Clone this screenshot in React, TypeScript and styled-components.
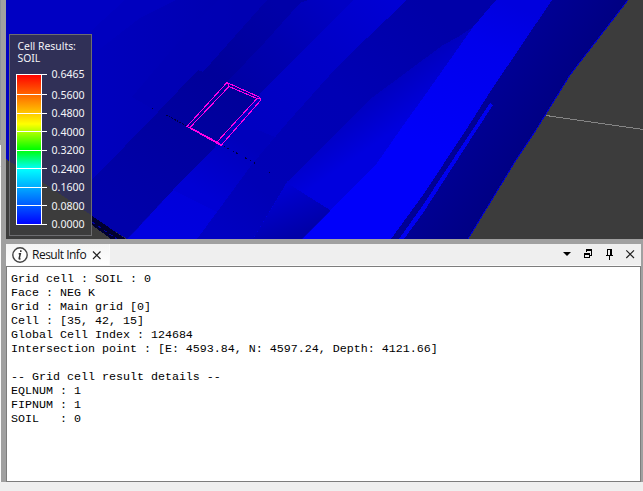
import React from "react";
import styled, { createGlobalStyle } from "styled-components";

const GlobalStyle = createGlobalStyle`
  * { box-sizing: border-box; }
  body { margin: 0; overflow: hidden; background: #efefef; }
`;

const Window = styled.div`
  display: flex;
  width: 643px;
  height: 491px;
  background: #efefef;
`;

const Gutter = styled.div`
  width: 1px;
  height: 482px;
  background: linear-gradient(#8d919a 0 140px, #a0a0a0 140px 145px, #fafafa 145px 166px, #e8e8e8 166px 167px, #fafafa 167px);
`;

const Dock = styled.div`
  width: 642px;
  height: 482px;
  padding-left: 5px;
  background: #a0a0a0;
  display: flex;
  flex-direction: column;
  gap: 5px;
`;

const Viewport = styled.div`
  position: relative;
  height: 239px;
  background: #3c3c3c;
`;

const Scene = styled.svg`
  display: block;
`;

const Legend = styled.div`
  position: absolute;
  left: 3px;
  top: 34px;
  width: 83px;
  height: 202px;
  border: 1px solid #6d6d70;
  background: rgba(60, 60, 60, 0.8);
  color: #f4f4f8;
  font: 10.4px/12px "Noto Sans", sans-serif;
`;

const LegendTitle = styled.div`
  padding: 5px 0 0 7.5px;
  white-space: pre;
  height: 33px;
`;

const LegendBody = styled.div`
  display: flex;
  padding-left: 6px;
  gap: 4.5px;
`;

const ColorBar = styled.svg`
  flex: none;
  margin-top: 6px;
`;

const Labels = styled.div`
  display: flex;
  flex-direction: column;
  font-size: 10.6px;
`;

const Label = styled.div<{ $height: number }>`
  height: ${(p) => p.$height}px;
  line-height: 12px;
`;

const Panel = styled.section`
  width: 635px;
  height: 238px;
  display: flex;
  flex-direction: column;
  background: #efefef;
`;

const TabBar = styled.header`
  display: flex;
  height: 22px;
  justify-content: space-between;
  border-bottom: 1px solid #fafafa;
`;

const Tab = styled.div`
  display: flex;
  align-items: center;
  width: 104px;
  height: 21px;
  padding-left: 6px;
  background: linear-gradient(#f4f4f4, #ffffff);
  border-right: 1px solid #fafafa;
  font: 12px/20px "Open Sans", sans-serif;
  letter-spacing: -0.5px;
  color: #111;
`;

const TabTitle = styled.span`
  width: 64px;
  padding-left: 4px;
  white-space: nowrap;
`;

const Actions = styled.div`
  display: flex;
  width: 80px;
  height: 21px;
`;

const Output = styled.pre`
  flex: 1;
  margin: 0;
  padding: 5px 4px;
  border: 1px solid #7d7d7d;
  background: #fff;
  color: #000;
  font: 11.664px/14px "Courier New", "Liberation Mono", monospace;
`;

const values = ["0.6465", "0.5600", "0.4800", "0.4000", "0.3200", "0.2400", "0.1600", "0.0800", "0.0000"];
const ticks = [0.5, 20.5, 39.5, 57.5, 76.5, 94.5, 113.5, 131.5, 150.5];

const details = `Grid cell : SOIL : 0
Face : NEG K
Grid : Main grid [0]
Cell : [35, 42, 15]
Global Cell Index : 124684
Intersection point : [E: 4593.84, N: 4597.24, Depth: 4121.66]

-- Grid cell result details --
EQLNUM : 1
FIPNUM : 1
SOIL   : 0`;

type Stop = [number, string];

const gradients: { id: string; from: [number, number]; to: [number, number]; stops: Stop[] }[] = [
  { id: "west", from: [92, 60], to: [235, 60], stops: [[0, "#0000be"], [1, "#0000b0"]] },
  { id: "trench", from: [270, 0], to: [120, 220], stops: [[0, "#0000a8"], [0.35, "#00009a"], [0.6, "#0000a0"], [1, "#0000aa"]] },
  { id: "bench", from: [335, 0], to: [230, 100], stops: [[0, "#0000c4"], [0.5, "#0000b0"], [1, "#0000a2"]] },
  { id: "crest", from: [390, 0], to: [240, 165], stops: [[0, "#0000d4"], [0.35, "#0000c8"], [1, "#0000c0"]] },
  { id: "lower", from: [240, 140], to: [205, 195], stops: [[0, "#0000bc"], [1, "#0000d4"]] },
  { id: "foot", from: [185, 190], to: [165, 239], stops: [[0, "#0000da"], [1, "#0000e0"]] },
  { id: "valley", from: [430, 10], to: [225, 239], stops: [[0, "#0000a8"], [0.4, "#0000b4"], [0.8, "#0000b6"], [1, "#0000c2"]] },
  { id: "slope", from: [372, 80], to: [403, 125], stops: [[0, "#0000b6"], [1, "#0000de"]] },
  { id: "shade", from: [282, 188], to: [302, 233], stops: [[0, "#0000d2"], [1, "#0000a8"]] },
  { id: "ridge", from: [500, 0], to: [440, 150], stops: [[0, "#0000de"], [0.3, "#0000ec"], [1, "#0000fa"]] },
  { id: "flank", from: [500, 80], to: [550, 112], stops: [[0, "#000094"], [1, "#000084"]] },
];

function Reservoir() {
  return (
    <Scene width="637" height="239" viewBox="6 0 637 239" shapeRendering="crispEdges">
      <defs>
        {gradients.map((g) => (
          <linearGradient key={g.id} id={g.id} gradientUnits="userSpaceOnUse" x1={g.from[0]} y1={g.from[1]} x2={g.to[0]} y2={g.to[1]}>
            {g.stops.map(([offset, color]) => <stop key={offset} offset={offset} stopColor={color} />)}
          </linearGradient>
        ))}
      </defs>
      <path fill="#0000c3" d="M6 0H628L570 75 536 130 516 160 468 239H127L42 182 6 159Z" />
      <path fill="url(#west)" d="M125 0 92 30V180L158 112 198 70 203 72 267 0Z" />
      <path fill="#0000bf" d="M92 55 140 18 176 0H125L92 30Z" />
      <path fill="#0000b4" opacity=".6" d="M218 0 180 40 132 97 158 112 198 70 203 72 267 0Z" />
      <path fill="url(#trench)" d="M267 0 203 72 198 70 158 112 92 180V217L127 239 173 190 215 147 257 97 308 0Z" />
      <path fill="url(#bench)" d="M308 0 300 3 265 42 227 82 257 97 333 20 353 0Z" />
      <path fill="url(#crest)" d="M353 0 333 20 257 97 215 147 253 163 287 123 337 67 367 38 407 0Z" />
      <path fill="url(#lower)" d="M258 130 230 130 215 147 173 190 128 239H197L217 212 253 163 275 137Z" />
      <path fill="url(#foot)" d="M173 190 128 239H197L217 212Z" />
      <path fill="url(#valley)" d="M407 0 367 38 337 67 287 123 253 163 217 212 197 239H302L430 93 496 0Z" />
      <path fill="url(#slope)" d="M443 45 373 97 287 182 253 239H302L377 163 423 98 473 27 458 37Z" />
      <path fill="url(#shade)" d="M287 183 330 210 302 239H253Z" />
      <path fill="url(#ridge)" d="M496 0 473 27 423 98 407 120 377 163 330 211 302 239H391L423 195 466 130 490 92 552 0Z" />
      <path fill="url(#flank)" d="M552 0 490 92 466 130 423 195 391 239H468L516 160 536 130 570 75 628 0Z" />
      <path fill="#0000f0" d="M490 103 493 105 463 151 423 213 404 239H399L423 205Z" />
      <path stroke="#0000d0" fill="none" d="M628 0 570 75 536 130 516 160 468 239" />
      <path fill="#000030" d="M92 216 126 239H111L92 225Z" />
      <path stroke="#0000a0" fill="none" strokeDasharray="4 3" d="M92 222 117 239" />
      <path stroke="#000040" fill="none" strokeDasharray="2 1" d="M166 115 187 126" />
      <path stroke="#000040" fill="none" strokeDasharray="1 3 2 4" d="M224 146 258 165M152 108h1M269 172h1" />
      <path stroke="#858585" fill="none" d="M546 115.5 643 129.5" />
      <path stroke="#ff00e6" fill="none" d="M227 82.5 259 97 261 100 221 145.5 187 126.5ZM229 86.5 257 98.5 217 142 190 127.5ZM227 82 229 86M257 98H261M217 142 221 145" />
    </Scene>
  );
}

export default function App() {
  return (
    <>
      <GlobalStyle />
      <Window>
        <Gutter />
        <Dock>
          <Viewport>
            <Reservoir />
            <Legend>
              <LegendTitle>{"Cell Results:\nSOIL"}</LegendTitle>
              <LegendBody>
                <ColorBar width="31" height="151" shapeRendering="crispEdges">
                  <defs>
                    <linearGradient id="scale" x1="0" y1="0" x2="0" y2="1">
                      <stop offset="0" stopColor="#ff0000" />
                      <stop offset=".33" stopColor="#ffff00" />
                      <stop offset=".5" stopColor="#00ff00" />
                      <stop offset=".63" stopColor="#00ffff" />
                      <stop offset="1" stopColor="#0000ff" />
                    </linearGradient>
                  </defs>
                  <rect x=".5" y=".5" width="25" height="150" fill="url(#scale)" stroke="#fff" />
                  {ticks.map((y) => <path key={y} d={`M0 ${y}H31`} stroke="#fff" />)}
                </ColorBar>
                <Labels>
                  {values.map((value, i) => (
                    <Label key={value} $height={i === 0 ? 20.5 : 18.5}>{value}</Label>
                  ))}
                </Labels>
              </LegendBody>
            </Legend>
          </Viewport>
          <Panel>
            <TabBar>
              <Tab>
                <svg width="16" height="16" viewBox="0 0 16 16">
                  <circle cx="8" cy="8" r="7.2" fill="#fff" stroke="#444" strokeWidth="1.4" />
                  <path d="M8.8 3.3v1.6M6.7 6.7h1.6L7.2 11.5q-.1.8 1.3.1" fill="none" stroke="#333" strokeWidth="1.5" />
                </svg>
                <TabTitle>Result Info</TabTitle>
                <svg width="10" height="10" viewBox="0 0 10 10">
                  <path d="M1 1.5 8.5 9M8.5 1.5 1 9" stroke="#222" strokeWidth="1.2" />
                </svg>
              </Tab>
              <Actions>
                <svg width="80" height="21" viewBox="561 244 80 21">
                  <path d="M563 252h8l-4 4z" fill="#000" />
                  <g fill="none" stroke="#000" shapeRendering="crispEdges">
                    <path d="M586.5 252V249.5H591.5V255.5H590M586 250.5H592" />
                    <path d="M584.5 253.5H589.5V257.5H584.5ZM584 254.5H590" />
                    <path d="M607.5 255V249.5H611.5V255M606 255.5H613M609.5 256V260M610.5 250V255" />
                  </g>
                  <path d="M626.3 250.3 634 258M634 250.3 626.3 258" stroke="#222" strokeWidth="1.2" />
                </svg>
              </Actions>
            </TabBar>
            <Output>{details}</Output>
          </Panel>
        </Dock>
      </Window>
    </>
  );
}
